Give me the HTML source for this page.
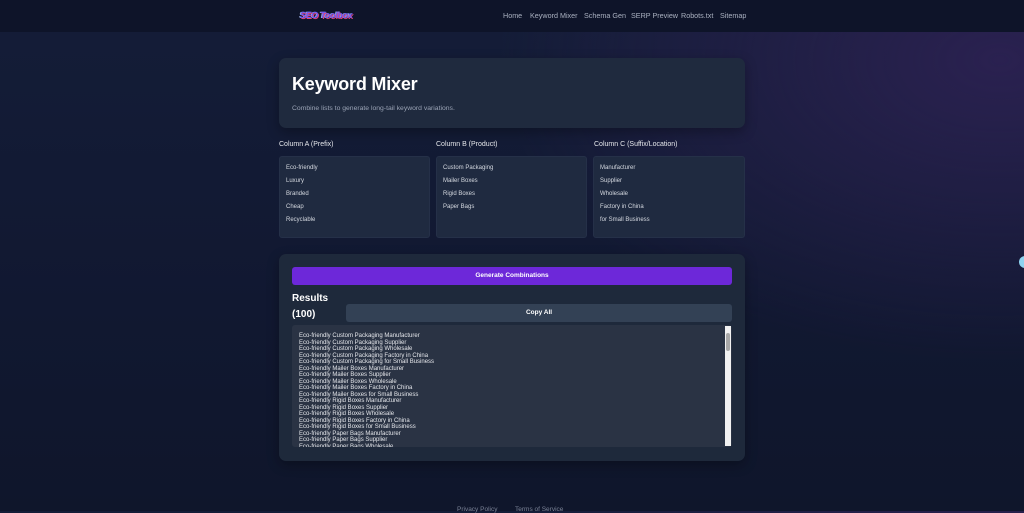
<!DOCTYPE html>
<html><head><style>
*{margin:0;padding:0;box-sizing:border-box}
body{width:1024px;height:511px;overflow:hidden;font-family:"Liberation Sans",sans-serif;background:radial-gradient(ellipse 500px 300px at 1000px 60px,#2a2150 0%,rgba(40,30,80,0) 100%),linear-gradient(180deg,#141d38 0%,#111831 60%,#0f162b 100%);color:#e5e7eb;position:relative}
.hdr{position:absolute;left:0;top:0;width:1024px;height:32px;background:#0e1429}
.logo{position:absolute;left:300px;top:10px;font:bold 9px "Liberation Sans";color:#6d5cf0;text-shadow:1px 1px 0 #e0457b,-1px 0 0 #9ad;letter-spacing:-.3px;transform:skewX(-10deg)}
.nav{position:absolute;top:11px;font-size:7.2px;color:#aab1c0}
.card{position:absolute;background:#1e293b;border-radius:7px;box-shadow:0 4px 12px rgba(0,0,0,.3)}
.lbl{position:absolute;top:141px;font-size:7px;color:#e5e7eb}
.ta{position:absolute;top:156px;width:151px;height:82px;background:#1f2a40;border-radius:3px;border:1px solid #253048;font-size:6px;color:#d5d9e0;padding:5px 6px;line-height:13px}
.res{position:absolute;left:292px;top:325px;width:440px;height:122px;background:#2a3344;border-radius:3px;overflow:hidden;padding:8px 7px;font-size:6px;line-height:6.5px;color:#e5e7eb}
</style></head><body>
<div class="hdr"></div>
<div class="logo">SEO Toolbox</div>
<div class="nav" style="left:503px">Home</div>
<div class="nav" style="left:530px">Keyword Mixer</div>
<div class="nav" style="left:584px">Schema Gen</div>
<div class="nav" style="left:631px">SERP Preview</div>
<div class="nav" style="left:681px">Robots.txt</div>
<div class="nav" style="left:720px">Sitemap</div>

<div class="card" style="left:279px;top:58px;width:466px;height:70px;background:#1f2a3e"></div>
<div style="position:absolute;left:292px;top:74px;font-size:18px;font-weight:bold;color:#fff;letter-spacing:-.2px">Keyword Mixer</div>
<div style="position:absolute;left:292px;top:105px;font-size:6.8px;color:#9aa3b5">Combine lists to generate long-tail keyword variations.</div>

<div class="lbl" style="left:279px">Column A (Prefix)</div>
<div class="lbl" style="left:436px">Column B (Product)</div>
<div class="lbl" style="left:594px">Column C (Suffix/Location)</div>
<div class="ta" style="left:279px">Eco-friendly<br>Luxury<br>Branded<br>Cheap<br>Recyclable</div>
<div class="ta" style="left:436px">Custom Packaging<br>Mailer Boxes<br>Rigid Boxes<br>Paper Bags</div>
<div class="ta" style="left:593px;width:152px">Manufacturer<br>Supplier<br>Wholesale<br>Factory in China<br>for Small Business</div>

<div class="card" style="left:279px;top:254px;width:466px;height:207px"></div>
<div style="position:absolute;left:292px;top:267px;width:440px;height:18px;background:#6d28d9;border-radius:3px;font-size:6.5px;font-weight:bold;color:#fff;text-align:center;line-height:18px">Generate Combinations</div>
<div style="position:absolute;left:292px;top:291px;font-size:10px;font-weight:bold;color:#fff;line-height:16px">Results<br>(100)</div>
<div style="position:absolute;left:346px;top:304px;width:386px;height:18px;background:#334155;border-radius:3px;font-size:6.5px;font-weight:bold;color:#fff;text-align:center;line-height:18px">Copy All</div>
<div class="res">Eco-friendly Custom Packaging Manufacturer<br>Eco-friendly Custom Packaging Supplier<br>Eco-friendly Custom Packaging Wholesale<br>Eco-friendly Custom Packaging Factory in China<br>Eco-friendly Custom Packaging for Small Business<br>Eco-friendly Mailer Boxes Manufacturer<br>Eco-friendly Mailer Boxes Supplier<br>Eco-friendly Mailer Boxes Wholesale<br>Eco-friendly Mailer Boxes Factory in China<br>Eco-friendly Mailer Boxes for Small Business<br>Eco-friendly Rigid Boxes Manufacturer<br>Eco-friendly Rigid Boxes Supplier<br>Eco-friendly Rigid Boxes Wholesale<br>Eco-friendly Rigid Boxes Factory in China<br>Eco-friendly Rigid Boxes for Small Business<br>Eco-friendly Paper Bags Manufacturer<br>Eco-friendly Paper Bags Supplier<br>Eco-friendly Paper Bags Wholesale</div>
<div style="position:absolute;left:725px;top:326px;width:6px;height:120px;background:#f1f1f1"></div>
<div style="position:absolute;left:726px;top:333px;width:4px;height:18px;background:#a8a8a8;border-radius:2px"></div>

<div style="position:absolute;left:457px;top:506px;font-size:6.5px;color:#7a8296">Privacy Policy</div>
<div style="position:absolute;left:515px;top:506px;font-size:6.5px;color:#7a8296">Terms of Service</div>
<div style="position:absolute;left:1019px;top:256px;width:12px;height:12px;border-radius:50%;background:#8fd3f0"></div>
</body></html>
